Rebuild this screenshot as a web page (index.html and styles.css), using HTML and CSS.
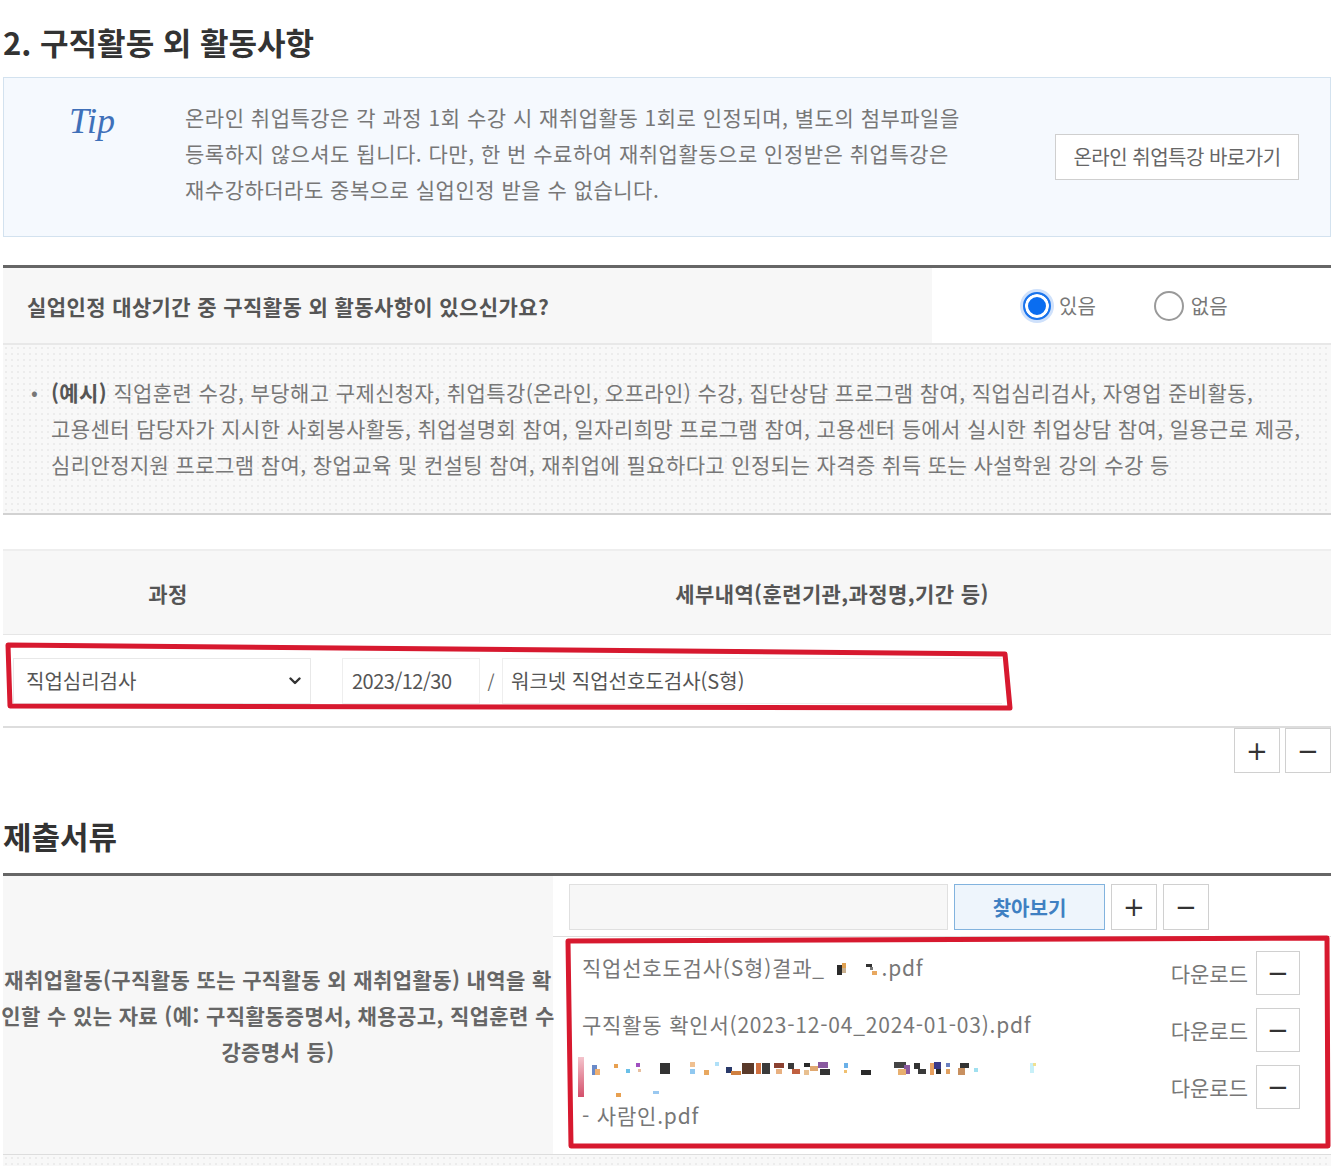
FILE: index.html
```html
<!DOCTYPE html>
<html lang="ko">
<head>
    <meta charset="UTF-8">
    <title>구직활동 외 활동사항</title>
    <link rel="stylesheet" href="styles.css">
</head>
<body>
<div class="wrap">
    <h2 class="sec-title">2. 구직활동 외 활동사항</h2>

    <div class="tip-box">
        <div class="tip-logo">Tip</div>
        <p class="tip-text">온라인 취업특강은 각 과정 1회 수강 시 재취업활동 1회로 인정되며, 별도의 첨부파일을<br>등록하지 않으셔도 됩니다. 다만, 한 번 수료하여 재취업활동으로 인정받은 취업특강은<br>재수강하더라도 중복으로 실업인정 받을 수 없습니다.</p>
        <a class="tip-btn">온라인 취업특강 바로가기</a>
    </div>

    <div class="qa">
        <div class="qa-row">
            <div class="qa-q">실업인정 대상기간 중 구직활동 외 활동사항이 있으신가요?</div>
            <div class="qa-a">
                <label class="radio on"><span class="dot"></span>있음</label>
                <label class="radio"><span class="dot"></span>없음</label>
            </div>
        </div>
        <div class="example">
            <div class="ex-item">
                <span class="bullet">•</span>
                <p><b>(예시)</b> 직업훈련 수강, 부당해고 구제신청자, 취업특강(온라인, 오프라인) 수강, 집단상담 프로그램 참여, 직업심리검사, 자영업 준비활동,<br>고용센터 담당자가 지시한 사회봉사활동, 취업설명회 참여, 일자리희망 프로그램 참여, 고용센터 등에서 실시한 취업상담 참여, 일용근로 제공,<br>심리안정지원 프로그램 참여, 창업교육 및 컨설팅 참여, 재취업에 필요하다고 인정되는 자격증 취득 또는 사설학원 강의 수강 등</p>
            </div>
        </div>
    </div>

    <div class="act-table">
        <div class="act-head">
            <div class="col1">과정</div>
            <div class="col2">세부내역(훈련기관,과정명,기간 등)</div>
        </div>
        <div class="act-row">
            <div class="col1">
                <div class="select">직업심리검사
                    <svg class="chev" width="12" height="8" viewBox="0 0 12 8"><polyline points="1.5,1.5 6,6 10.5,1.5" fill="none" stroke="#333" stroke-width="2.4" stroke-linecap="round" stroke-linejoin="round"/></svg>
                </div>
            </div>
            <div class="col2">
                <div class="inp date">2023/12/30</div>
                <span class="slash">/</span>
                <div class="inp detail">워크넷 직업선호도검사(S형)</div>
            </div>
        </div>
    </div>
    <div class="row-btns">
        <button class="sq">+</button>
        <button class="sq">−</button>
    </div>

    <h2 class="sec-title docs-title">제출서류</h2>
    <div class="docs">
        <div class="docs-label">재취업활동(구직활동 또는 구직활동 외 재취업활동) 내역을 확<br>인할 수 있는 자료 (예: 구직활동증명서, 채용공고, 직업훈련 수<br>강증명서 등)</div>
        <div class="docs-body">
            <div class="upload">
                <div class="file-inp"></div>
                <button class="find-btn">찾아보기</button>
                <button class="sq">+</button>
                <button class="sq">−</button>
            </div>
            <ul class="files">
                <li>
                    <div class="name">직업선호도검사(S형)결과_ <svg class="blur-inline" width="50" height="20" viewBox="0 0 50 20"><rect x="5" y="6" width="5" height="10" fill="#2b2b2b"/><rect x="10" y="4" width="4" height="5" fill="#e0a050"/><rect x="10" y="9" width="4" height="5" fill="#c8b090"/><rect x="34" y="5" width="6" height="3" fill="#333"/><rect x="38" y="8" width="3" height="3" fill="#777"/><rect x="40" y="12" width="5" height="4" fill="#e8a860"/></svg>.pdf</div>
                    <div class="dl"><span>다운로드</span><button class="sq sm">−</button></div>
                </li>
                <li>
                    <div class="name">구직활동 확인서(2023-12-04_2024-01-03).pdf</div>
                    <div class="dl"><span>다운로드</span><button class="sq sm">−</button></div>
                </li>
                <li class="tall">
                    <div class="name">
                        <svg class="blur-line" width="480" height="40" viewBox="0 0 480 40">
                            <defs><linearGradient id="pk" x1="0" y1="0" x2="0" y2="1"><stop offset="0" stop-color="#f4c4cc"/><stop offset="1" stop-color="#d24a66"/></linearGradient></defs>
                            <rect x="0" y="0" width="6" height="42" fill="url(#pk)"/>
                            <rect x="14" y="8" width="5" height="10" fill="#6a8ac8"/><rect x="17" y="12" width="5" height="6" fill="#f0b070"/>
                            <rect x="36" y="7" width="4" height="4" fill="#e8a050"/><rect x="48" y="12" width="4" height="4" fill="#6ac0e8"/>
                            <rect x="58" y="6" width="4" height="4" fill="#a050c0"/><rect x="60" y="12" width="3" height="3" fill="#e8c0a0"/>
                            <rect x="82" y="6" width="10" height="11" fill="#333"/>
                            <rect x="112" y="5" width="5" height="5" fill="#f0c090"/><rect x="112" y="12" width="5" height="5" fill="#90c8f0"/>
                            <rect x="126" y="13" width="5" height="5" fill="#e8a860"/><rect x="137" y="5" width="4" height="4" fill="#b0e0f8"/>
                            <rect x="148" y="10" width="6" height="6" fill="#2a3a6a"/><rect x="153" y="14" width="10" height="4" fill="#d08040"/>
                            <rect x="164" y="6" width="12" height="11" fill="#5a3a2a"/><rect x="178" y="6" width="5" height="11" fill="#d07040"/><rect x="184" y="6" width="8" height="11" fill="#3a3a3a"/>
                            <rect x="196" y="6" width="10" height="5" fill="#8a4030"/><rect x="198" y="12" width="6" height="5" fill="#e8b080"/>
                            <rect x="210" y="6" width="6" height="6" fill="#3a3a3a"/><rect x="214" y="12" width="8" height="5" fill="#c06040"/>
                            <rect x="226" y="6" width="6" height="4" fill="#2a2a2a"/><rect x="232" y="9" width="8" height="5" fill="#e0a870"/><rect x="226" y="13" width="5" height="5" fill="#e8c090"/>
                            <rect x="240" y="5" width="10" height="6" fill="#8a5aa0"/><rect x="242" y="12" width="10" height="6" fill="#333"/>
                            <rect x="266" y="6" width="4" height="5" fill="#6ab0e8"/><rect x="266" y="13" width="3" height="3" fill="#f0c070"/>
                            <rect x="283" y="13" width="10" height="5" fill="#2a2a2a"/>
                            <rect x="316" y="5" width="12" height="6" fill="#444"/><rect x="326" y="8" width="6" height="9" fill="#8a5aa0"/><rect x="320" y="12" width="8" height="6" fill="#e8b070"/>
                            <rect x="336" y="6" width="6" height="6" fill="#333"/><rect x="340" y="12" width="8" height="5" fill="#3a3a3a"/>
                            <rect x="352" y="6" width="4" height="12" fill="#e8a060"/><rect x="356" y="5" width="7" height="7" fill="#3a3a8a"/><rect x="358" y="12" width="5" height="5" fill="#2a2a2a"/>
                            <rect x="368" y="6" width="4" height="4" fill="#6a80c0"/><rect x="368" y="12" width="4" height="5" fill="#e0a060"/>
                            <rect x="382" y="6" width="9" height="5" fill="#333"/><rect x="380" y="11" width="7" height="7" fill="#c89060"/>
                            <rect x="396" y="11" width="4" height="4" fill="#a0e0f0"/>
                            <rect x="452" y="6" width="4" height="10" fill="#c8f0f8"/><rect x="455" y="6" width="3" height="3" fill="#f0e090"/>
                            <rect x="38" y="36" width="5" height="4" fill="#e8a050"/><rect x="75" y="34" width="6" height="3" fill="#9ac8f0"/>
                        </svg>
                        <span class="tail">- 사람인.pdf</span>
                    </div>
                    <div class="dl"><span>다운로드</span><button class="sq sm">−</button></div>
                </li>
            </ul>
        </div>
    </div>
    <div class="docs-foot"></div>
</div>

<svg class="marks" width="1334" height="1167" viewBox="0 0 1334 1167">
    <polygon points="8,645 1005,654 1010,708 10,706" fill="none" stroke="#d7192f" stroke-width="5" stroke-linejoin="round"/>
    <polygon points="568,941 1327,938 1328,1146 571,1146" fill="none" stroke="#d7192f" stroke-width="5" stroke-linejoin="round"/>
</svg>
</body>
</html>
```

FILE: styles.css
```css
*{
    margin: 0;
    padding: 0;
    box-sizing: border-box;
}
body{
    background: #fff;
    font-family: "Noto Sans CJK KR", "Noto Sans", sans-serif;
    color: #666;
    position: relative;
}
.wrap{
    width: 1328px;
    margin-left: 3px;
}
.sec-title{
    font-size: 31px;
    line-height: 40px;
    color: #333;
    font-weight: bold;
    margin-top: 22px;
    margin-bottom: 15px;
}

/* tip */
.tip-box{
    display: flex;
    background: #f5f9fe;
    border: 1px solid #d3e2ef;
    height: 160px;
}
.tip-logo{
    flex: 0 0 181px;
    padding: 23px 0 0 65px;
    font-family: "Liberation Serif", serif;
    font-style: italic;
    font-size: 36px;
    line-height: 40px;
    color: #3f70b9;
}
.tip-text{
    flex: 1;
    padding: 21px 0 29px;
    font-size: 21px;
    line-height: 36px;
    color: #777;
    white-space: nowrap;
    letter-spacing: 0.5px;
}
.tip-btn{
    align-self: center;
    margin-right: 31px;
    width: 244px;
    height: 46px;
    line-height: 44px;
    text-align: center;
    background: #fff;
    border: 1px solid #cfcfcf;
    font-size: 20px;
    color: #666;
    letter-spacing: -0.5px;
}

/* question */
.qa{
    margin-top: 28px;
    border-top: 3px solid #666;
}
.qa-row{
    display: flex;
    height: 77px;
    border-bottom: 2px solid #e8e8e8;
}
.qa-q{
    width: 929px;
    background: #f7f7f7;
    display: flex;
    align-items: center;
    padding-left: 24px;
    font-size: 21px;
    font-weight: bold;
    color: #555;
    letter-spacing: 0.4px;
}
.qa-a{
    flex: 1;
    display: flex;
    align-items: center;
    padding-left: 90px;
    gap: 58px;
}
.radio{
    display: flex;
    align-items: center;
    gap: 7px;
    font-size: 20px;
    color: #777;
}
.radio .dot{
    width: 30px;
    height: 30px;
    border-radius: 50%;
    border: 2px solid #9a9a9a;
    background: #fff;
}
.radio.on .dot{
    width: 28px;
    height: 28px;
    margin: 1px;
    border: 2px solid #1a74ec;
    background: #0a6df0;
    box-shadow: inset 0 0 0 3px #fff, 0 0 0 3px #cfe1fb;
}

/* example */
.example{
    height: 170px;
    padding: 29px 0 0 28px;
    border-bottom: 2px solid #d2d2d2;
    background-color: #f8f8f8;
    background-image: radial-gradient(#ececec 1px, transparent 1px);
    background-size: 6px 6px;
}
.ex-item{
    display: flex;
}
.ex-item .bullet{
    width: 20px;
    font-size: 20px;
    line-height: 36px;
    color: #777;
}
.ex-item p{
    font-size: 21px;
    line-height: 36px;
    color: #777;
    white-space: nowrap;
    letter-spacing: 0.4px;
}
.ex-item b{
    color: #555;
}

/* activity table */
.act-table{
    margin-top: 34px;
    border-top: 2px solid #eee;
}
.act-head{
    display: flex;
    height: 84px;
    background: #f7f7f7;
    border-bottom: 1px solid #e6e6e6;
    font-size: 21px;
    font-weight: bold;
    color: #555;
    letter-spacing: 0.4px;
}
.act-head > div{
    display: flex;
    align-items: center;
    justify-content: center;
}
.col1{
    width: 330px;
}
.col2{
    flex: 1;
}
.act-row{
    display: flex;
    height: 93px;
    border-bottom: 2px solid #ddd;
}
.act-row > div{
    display: flex;
    align-items: center;
}
.act-row .col1{
    padding-left: 10px;
}
.select{
    width: 298px;
    height: 46px;
    border: 1px solid #e8e8e8;
    background: #fff;
    display: flex;
    align-items: center;
    justify-content: space-between;
    padding: 0 9px 0 12px;
    font-size: 20px;
    color: #555;
}
.act-row .col2{
    padding-left: 9px;
}
.inp{
    height: 46px;
    border: 1px solid #eee;
    display: flex;
    align-items: center;
    font-size: 20px;
    color: #555;
}
.inp.date{
    width: 138px;
    padding-left: 9px;
    letter-spacing: -0.5px;
}
.slash{
    width: 22px;
    text-align: center;
    font-size: 18px;
    color: #666;
}
.inp.detail{
    width: 500px;
    padding-left: 8px;
    border-right: none;
}
.row-btns{
    display: flex;
    justify-content: flex-end;
    gap: 5px;
}
.sq{
    width: 46px;
    height: 45px;
    background: #fff;
    border: 1px solid #d0d0d0;
    font-family: "DejaVu Sans", sans-serif;
    font-size: 26px;
    line-height: 40px;
    color: #333;
}
.sq.sm{
    width: 44px;
    height: 44px;
}

/* documents */
.docs-title{
    margin-top: 43px;
    margin-bottom: 17px;
}
.docs{
    display: flex;
    border-top: 3px solid #666;
    border-bottom: 1px solid #ddd;
}
.docs-label{
    width: 550px;
    background: #f7f7f7;
    display: flex;
    align-items: center;
    justify-content: center;
    text-align: center;
    white-space: nowrap;
    font-size: 21px;
    line-height: 36px;
    font-weight: bold;
    color: #666;
    letter-spacing: 0.4px;
}
.docs-body{
    flex: 1;
}
.upload{
    height: 61px;
    display: flex;
    align-items: flex-start;
    gap: 6px;
    padding: 8px 0 0 16px;
    border-bottom: 1px solid #ddd;
}
.file-inp{
    width: 379px;
    height: 46px;
    background: #f7f7f7;
    border: 1px solid #e0e0e0;
}
.find-btn{
    width: 151px;
    height: 46px;
    background: #eef5fc;
    border: 1px solid #82b3de;
    font-family: "Noto Sans CJK KR", sans-serif;
    font-size: 20px;
    font-weight: bold;
    color: #3f80c2;
}
.upload .sq{
    height: 46px;
}
.files{
    list-style: none;
    padding: 4px 31px 21px 29px;
}
.files li{
    display: flex;
    justify-content: space-between;
    align-items: flex-start;
    height: 57px;
}
.files li.tall{
    height: 78px;
}
.files .name{
    padding-top: 12px;
    font-size: 21px;
    line-height: 28px;
    color: #777;
    letter-spacing: 0.8px;
}
.blur-inline{
    vertical-align: -3px;
}
.files li.tall .name{
    padding-top: 2px;
    margin-left: -4px;
}
.blur-line{
    display: block;
}
.tail{
    display: block;
    line-height: 36px;
    margin-left: 4px;
}
.dl{
    display: flex;
    align-items: center;
    gap: 8px;
    margin-top: 10px;
    font-size: 21px;
    color: #777;
}
.docs-foot{
    height: 11px;
    background-color: #f8f8f8;
    background-image: radial-gradient(#ececec 1px, transparent 1px);
    background-size: 6px 6px;
}

/* annotation marks */
.marks{
    position: absolute;
    left: 0;
    top: 0;
    pointer-events: none;
}
```
